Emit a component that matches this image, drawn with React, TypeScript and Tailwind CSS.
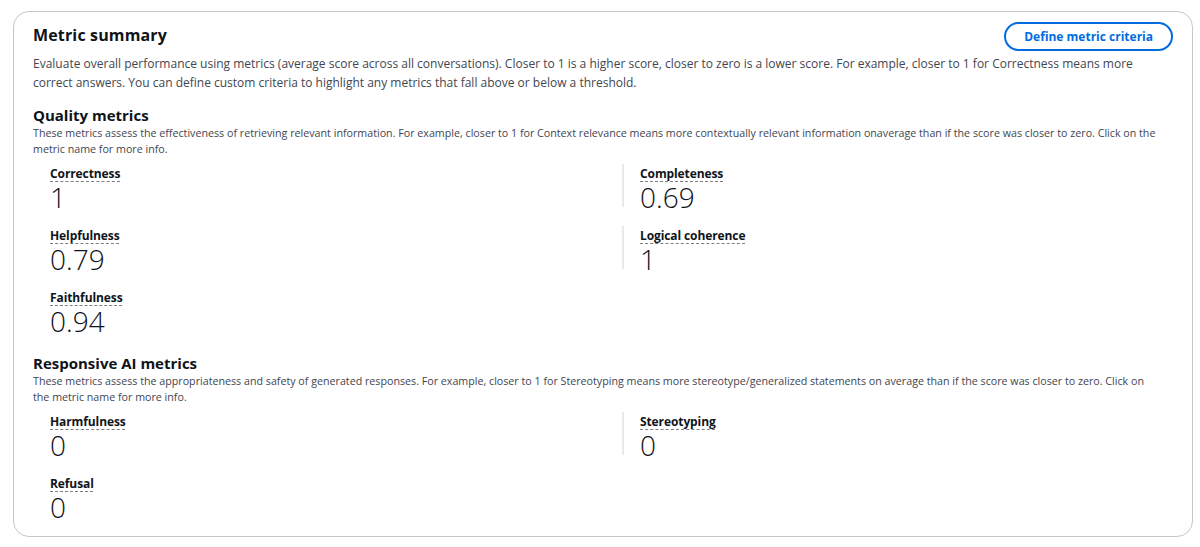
const font = "font-['Open_Sans',sans-serif]";

type Metric = { name: string; value: string };

const quality: Metric[] = [
  { name: "Correctness", value: "1" },
  { name: "Completeness", value: "0.69" },
  { name: "Helpfulness", value: "0.79" },
  { name: "Logical coherence", value: "1" },
  { name: "Faithfulness", value: "0.94" },
];

const responsible: Metric[] = [
  { name: "Harmfulness", value: "0" },
  { name: "Stereotyping", value: "0" },
  { name: "Refusal", value: "0" },
];

function MetricItem({ metric, divider }: { metric: Metric; divider: boolean }) {
  return (
    <div className={divider ? "h-[43px] border-l-2 border-[#e9e9ed] pl-[16px]" : "h-[43px] pl-[17px]"}>
      <div className="h-[16px] leading-[16px]">
        <span className="text-[12px] font-bold tracking-[-0.1px] text-[#0f141a] underline decoration-dashed decoration-[#7d7d85] decoration-1 underline-offset-[3px]">
          {metric.name}
        </span>
      </div>
      <div className="h-[24px] mt-[5px] text-[28px] font-light leading-[24px] text-[#0f141a]">{metric.value}</div>
    </div>
  );
}

function Section({ title, text, metrics }: { title: string; text: string; metrics: Metric[] }) {
  return (
    <div>
      <h2 className="text-[15px] font-bold leading-[20px] text-[#0f141a]">{title}</h2>
      <p className="text-[10.7px] leading-[16px] text-[#424650] pr-[10px]">{text}</p>
      <div className="grid grid-cols-[589px_1fr] gap-y-[19px] mt-[7px]">
        {metrics.map((m, i) => (
          <MetricItem key={m.name} metric={m} divider={i % 2 === 1} />
        ))}
      </div>
    </div>
  );
}

export default function App() {
  return (
    <div className={`${font} bg-white w-[1200px] h-[547px] pt-[11px] pl-[13px] pr-[7px]`}>
      <div className="border border-[#c6c6cd] rounded-[16px] px-[19px] pt-[10px] h-[526px]">
        <div className="flex justify-between items-center h-[29px]">
          <h1 className="text-[16px] tracking-[0.15px] font-bold leading-[24px] text-[#0f141a] mb-[4px]">Metric summary</h1>
          <button className="border-2 border-[#006ce0] rounded-full h-[29px] px-[18px] text-[12px] font-bold text-[#006ce0] leading-none">
            Define metric criteria
          </button>
        </div>
        <p className="text-[12px] leading-[19px] text-[#424650] mt-[3px] pr-[10px]">
          Evaluate overall performance using metrics (average score across all conversations). Closer to 1 is a higher score, closer to zero is a lower score. For example, closer to 1 for Correctness means more correct answers. You can define custom criteria to highlight any metrics that fall above or below a threshold.
        </p>
        <div className="mt-[13px]">
          <Section
            title="Quality metrics"
            text="These metrics assess the effectiveness of retrieving relevant information. For example, closer to 1 for Context relevance means more contextually relevant information onaverage than if the score was closer to zero. Click on the metric name for more info."
            metrics={quality}
          />
        </div>
        <div className="mt-[22px]">
          <Section
            title="Responsive AI metrics"
            text="These metrics assess the appropriateness and safety of generated responses. For example, closer to 1 for Stereotyping means more stereotype/generalized statements on average than if the score was closer to zero. Click on the metric name for more info."
            metrics={responsible}
          />
        </div>
      </div>
    </div>
  );
}
